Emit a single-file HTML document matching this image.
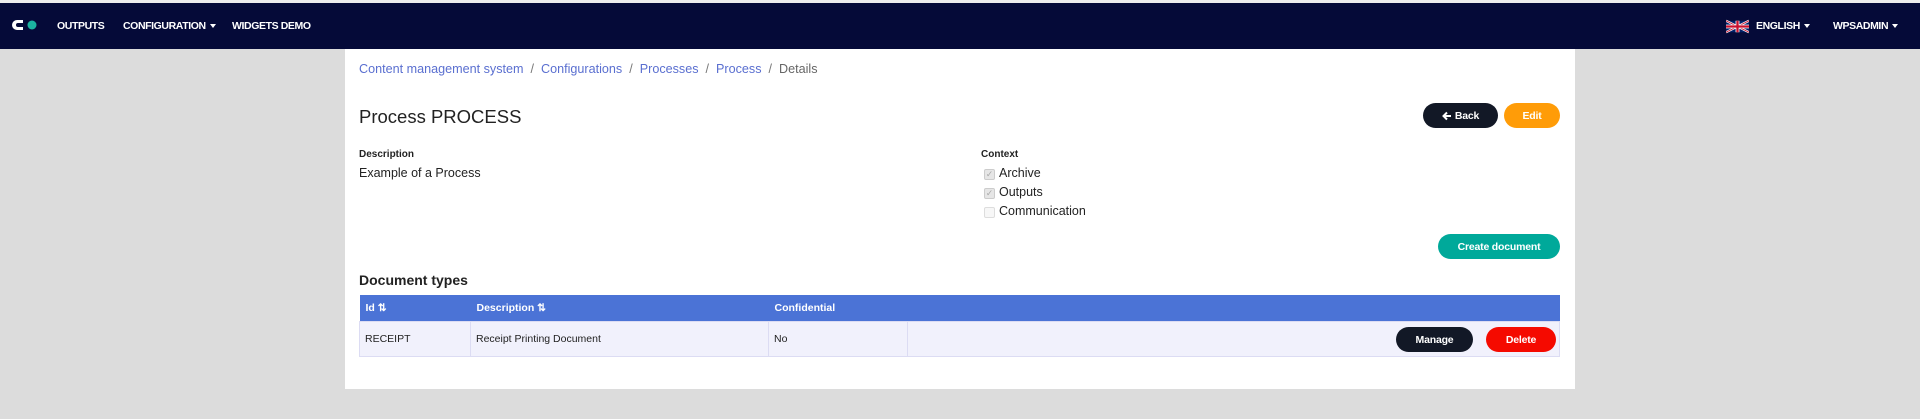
<!DOCTYPE html>
<html><head><style>
*{box-sizing:border-box;margin:0;padding:0}
body{width:1920px;height:419px;background:#dcdcdc;font-family:"Liberation Sans",sans-serif;position:relative;overflow:hidden;color:#222}
.nav{position:absolute;left:0;top:3px;width:1920px;height:46px;background:#050a38;color:#fff;font-size:10.5px;font-weight:bold}
.nav span{position:absolute;top:17px;letter-spacing:-0.4px}
.caret{display:inline-block;border-left:3.5px solid transparent;border-right:3.5px solid transparent;border-top:4px solid #fff;vertical-align:middle;margin-left:4px}
.card{position:absolute;left:345px;top:49px;width:1230px;height:340px;background:#fff}
.a{position:absolute;white-space:nowrap}
.btn{position:absolute;border-radius:13px;color:#fff;font-weight:bold;font-size:10.5px;display:flex;align-items:center;justify-content:center;letter-spacing:-0.2px}
.bc{color:#5a6fd0}
table{position:absolute;left:359px;top:295px;width:1201px;border-collapse:collapse;font-size:10.5px;table-layout:fixed}
th{background:#4b73d6;color:#fff;text-align:left;height:26px;padding-left:6px;font-weight:bold}
td{background:#f1f1fc;border:1px solid #dcdcf3;height:35px;padding-left:5px}
.cb{position:absolute;width:11px;height:11px;border:1px solid #ccc;background:#e6e6e6;border-radius:2px;font-size:9px;color:#aaa;line-height:9px;text-align:center}
</style></head><body>
<div style="position:absolute;left:0;top:0;width:1920px;height:3px;background:#eee"></div>
<div class="nav">
<svg style="position:absolute;left:12px;top:16px" width="26" height="12"><path d="M11 1H5a5 5 0 0 0 0 10h6V8H6a2 2 0 0 1 0-4h5z" fill="#fff"/><circle cx="20" cy="6" r="4.5" fill="#1bb3a0"/></svg>
<span style="left:57px">OUTPUTS</span>
<span style="left:123px">CONFIGURATION<i class="caret"></i></span>
<span style="left:232px">WIDGETS DEMO</span>
<svg style="position:absolute;left:1726px;top:16px" width="23" height="15" viewBox="0 0 60 30"><rect width="60" height="30" fill="#012169"/><path d="M0 0L60 30M60 0L0 30" stroke="#fff" stroke-width="6"/><path d="M0 0L60 30M60 0L0 30" stroke="#C8102E" stroke-width="2.5"/><path d="M30 0V30M0 15H60" stroke="#fff" stroke-width="10"/><path d="M30 0V30M0 15H60" stroke="#C8102E" stroke-width="6"/></svg>
<span style="left:1756px">ENGLISH<i class="caret"></i></span>
<span style="left:1833px">WPSADMIN<i class="caret"></i></span>
</div>
<div class="card"></div>
<div class="a" style="left:359px;top:62px;font-size:12.6px"><span class="bc">Content management system</span> <span style="color:#777">&nbsp;/&nbsp;</span> <span class="bc">Configurations</span> <span style="color:#777">&nbsp;/&nbsp;</span> <span class="bc">Processes</span> <span style="color:#777">&nbsp;/&nbsp;</span> <span class="bc">Process</span> <span style="color:#777">&nbsp;/&nbsp;</span> <span style="color:#666">Details</span></div>
<div class="a" style="left:359px;top:106px;font-size:18.5px;color:#222">Process PROCESS</div>
<div class="a" style="left:359px;top:149px;font-size:10px;font-weight:bold">Description</div>
<div class="a" style="left:359px;top:166px;font-size:12.5px">Example of a Process</div>
<div class="a" style="left:981px;top:149px;font-size:10px;font-weight:bold">Context</div>
<div class="cb" style="left:984px;top:169px">✓</div><div class="a" style="left:999px;top:166px;font-size:12.5px">Archive</div>
<div class="cb" style="left:984px;top:188px">✓</div><div class="a" style="left:999px;top:185px;font-size:12.5px">Outputs</div>
<div class="cb" style="left:984px;top:207px;background:#f7f7f7;border-color:#ddd"></div><div class="a" style="left:999px;top:204px;font-size:12.5px">Communication</div>
<div class="btn" style="left:1423px;top:103px;width:75px;height:25px;background:#121826"><svg width="10" height="10" style="margin-right:3px"><path d="M9 5H2M5 1.5L1.5 5 5 8.5" stroke="#fff" stroke-width="2" fill="none"/></svg>Back</div>
<div class="btn" style="left:1504px;top:103px;width:56px;height:25px;background:#ff9c08">Edit</div>
<div class="btn" style="left:1438px;top:234px;width:122px;height:25px;background:#00a99a">Create document</div>
<div class="a" style="left:359px;top:272px;font-size:14px;font-weight:bold">Document types</div>
<table><tr><th style="width:111px">Id ⇅</th><th style="width:298px">Description ⇅</th><th style="width:139px">Confidential</th><th></th></tr>
<tr><td>RECEIPT</td><td>Receipt Printing Document</td><td>No</td><td></td></tr></table>
<div class="btn" style="left:1396px;top:327px;width:77px;height:25px;background:#121826">Manage</div>
<div class="btn" style="left:1486px;top:327px;width:70px;height:25px;background:#f50a00">Delete</div>
</body></html>
